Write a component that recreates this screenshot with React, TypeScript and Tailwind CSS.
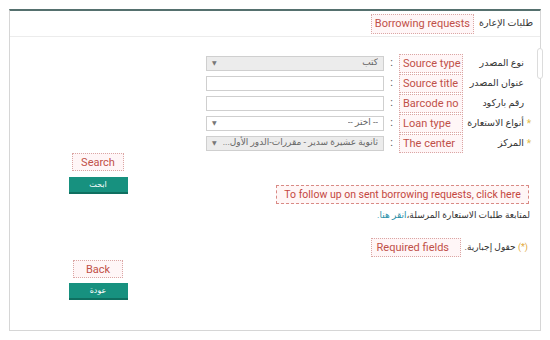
import React from "react";

const font = { fontFamily: 'Roboto, "DejaVu Sans", sans-serif' };

function Tag({ text, className = "" }: { text: string; className?: string }) {
    return (
        <span
            dir="ltr"
            className={`inline-flex items-center whitespace-nowrap border border-dotted border-[#dba6a4] bg-[#fff6f7] text-[#bf5048] text-[11px] leading-none ${className}`}
        >
            {text}
        </span>
    );
}

function Arrow() {
    return <span className="text-[6px] text-[#777] leading-none">▼</span>;
}

const rows = [
    { label: "نوع المصدر", tag: "Source type", kind: "select", value: "كتب", gray: true, req: false },
    { label: "عنوان المصدر", tag: "Source title", kind: "input", value: "", gray: false, req: false },
    { label: "رقم باركود", tag: "Barcode no", kind: "input", value: "", gray: false, req: false },
    { label: "أنواع الاستعارة", tag: "Loan type", kind: "select", value: "-- اختر --", gray: false, req: true },
    { label: "المركز", tag: "The center", kind: "select", value: "ثانوية عشيرة سدير - مقررات-الدور الأول...", gray: true, req: true },
];

function FormRow({ row }: { row: (typeof rows)[number] }) {
    return (
        <div className="flex h-[20px] items-center">
            <span className="w-[10px] text-center text-[#e2c04a] text-[10px]">{row.req ? "*" : ""}</span>
            <span className="w-[61px] text-[9.5px] text-[#333] whitespace-nowrap">{row.label}</span>
            <Tag text={row.tag} className="w-[64px] h-[19px] pl-[3px]" />
            <span className="w-[15px] text-center text-[11px] text-[#555]">:</span>
            <div
                className={`w-[178px] h-[15px] border border-[#cfcfcf] flex items-center justify-between px-[5px] ${
                    row.gray ? "bg-[#ececec]" : "bg-white"
                }`}
            >
                <span className="text-[9px] text-[#666] whitespace-nowrap overflow-hidden">{row.value}</span>
                {row.kind === "select" ? <Arrow /> : null}
            </div>
        </div>
    );
}

function TealButton({ text }: { text: string }) {
    return (
        <div className="w-[59px] h-[17px] bg-[#17917f] border-b-2 border-[#0f6f60] flex items-center justify-center text-white text-[8px]">
            {text}
        </div>
    );
}

export default function App() {
    return (
        <div className="w-[550px] h-[340px] bg-white p-[9px]" style={font}>
            <div className="relative h-[322px] border border-[#d6d6d6] border-t-2 border-t-[#55706e] flex flex-col">
                <div dir="rtl" className="h-[26px] border-b border-[#ececec] flex items-center gap-[5px] pr-[7px]">
                    <span className="text-[9.5px] text-[#333]">طلبات الإعارة</span>
                    <Tag text="Borrowing requests" className="h-[20px] px-[3px]" />
                </div>
                <div className="absolute right-[-3px] top-[37px] w-[6px] h-[31px] rounded-[3px] border border-[#dcdcdc] bg-white" />

                <div className="flex flex-1">
                    <div className="w-[176px] flex flex-col items-center">
                        <Tag text="Search" className="mt-[116px] h-[18px] px-[8px]" />
                        <div className="mt-[6px]">
                            <TealButton text="ابحث" />
                        </div>
                        <Tag text="Back" className="mt-[66px] h-[18px] px-[12px]" />
                        <div className="mt-[5px]">
                            <TealButton text="عودة" />
                        </div>
                    </div>

                    <div dir="rtl" className="flex-1 flex flex-col pt-[16px] pr-[6px]">
                        {rows.map((r) => (
                            <FormRow key={r.tag} row={r} />
                        ))}
                        <div className="mt-[32px] mr-[5px] w-[253px] h-[19px] border border-dashed border-[#d98a85] bg-[#fff6f6] flex items-center justify-center">
                            <span dir="ltr" className="text-[10.5px] text-[#c4473f] whitespace-nowrap">
                                To follow up on sent borrowing requests, click here
                            </span>
                        </div>
                        <div className="mt-[4px] mr-[4px] h-[14px] text-[9px] text-[#333] whitespace-nowrap leading-[14px]">
                            لمتابعة طلبات الاستعارة المرسلة،<span className="text-[#2a8fa8]">انقر هنا.</span>
                        </div>
                        <div className="mt-[16px] mr-[6px] flex items-center gap-[4px]">
                            <span className="text-[9px] text-[#333] whitespace-nowrap">
                                <span className="text-[#e2a83a]">(*)</span> حقول إجبارية.
                            </span>
                            <Tag text="Required fields" className="w-[90px] h-[19px] pl-[5px] border-dashed" />
                        </div>
                    </div>
                </div>
            </div>
        </div>
    );
}
